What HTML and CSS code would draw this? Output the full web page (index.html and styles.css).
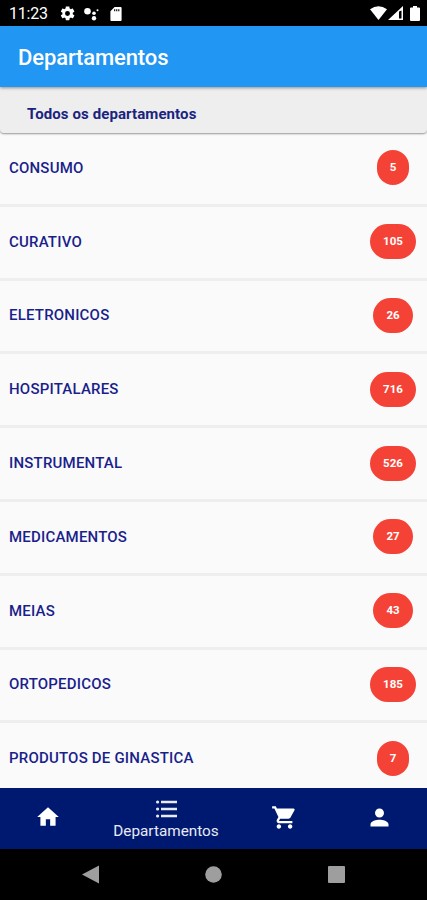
FILE: index.html
```html
<!DOCTYPE html>
<html lang="pt-BR">
<head>
    <meta charset="UTF-8">
    <meta name="viewport" content="width=device-width, initial-scale=1.0">
    <title>Departamentos</title>
    <link rel="stylesheet" href="styles.css">
</head>
<body>
    <div class="phone">
        <div class="status-bar">
            <span class="clock">11:23</span>
            <svg class="icon-gear" width="17" height="17" viewBox="0 0 24 24"><path fill-rule="evenodd" d="M19.4 13c.04-.3.06-.6.06-1s-.02-.7-.07-1l2.1-1.6c.2-.15.24-.4.12-.6l-2-3.5c-.12-.2-.37-.3-.6-.2l-2.4 1c-.5-.4-1-.7-1.6-1L14.6 2.5c-.04-.25-.24-.4-.5-.4h-4c-.25 0-.44.15-.48.4L9.25 5.1c-.6.25-1.13.57-1.62.94l-2.4-1c-.22-.08-.47 0-.6.22L2.74 8.8c-.12.2-.07.47.12.6L4.9 11c-.05.3-.09.64-.09 1s.02.7.07 1l-2 1.6c-.2.15-.25.4-.13.6l1.9 3.4c.12.2.37.3.6.2l2.4-1c.5.4 1 .7 1.6 1l.4 2.5c.05.25.25.4.5.4h4c.25 0 .45-.15.48-.4l.4-2.5c.6-.25 1.1-.6 1.6-1l2.4 1c.23.1.48 0 .6-.2l2-3.4c.1-.2.06-.45-.12-.6zM12 15.500a3.500 3.500 0 1 1 0-7 3.500 3.500 0 0 1 0 7z"/></svg>
            <svg class="icon-assistant" width="16" height="14" viewBox="0 0 16 14"><circle cx="3.500" cy="4.300" r="3.300"/><circle cx="10" cy="6.300" r="1.800"/><circle cx="13.500" cy="3.300" r="1"/><circle cx="10" cy="11.200" r="2.200"/></svg>
            <svg class="icon-sd" width="12" height="14" viewBox="0 0 12 15"><path fill-rule="evenodd" d="M4.500 0H11q1 0 1 1v13q0 1-1 1H1q-1 0-1-1V4.500zM4 2.500v2h1.200v-2zm2.200 0v2h1.200v-2zm2.200 0v2h1.200v-2z"/></svg>
            <div class="signals">
                <svg width="17" height="14" viewBox="0 0 17 14"><path d="M0 3.300Q8.500-3 17 3.300L8.500 14z"/></svg>
                <svg width="15" height="14" viewBox="0 0 15 14"><path fill-rule="evenodd" d="M15 0v14H0zM13.500 4.500L11 5.500v7h2.500z"/></svg>
                <svg class="battery" width="10" height="15" viewBox="0 0 10 15"><path d="M3 0h4v1.500h2q1 0 1 1V14q0 1-1 1H1q-1 0-1-1V2.500q0-1 1-1h2z"/></svg>
            </div>
        </div>

        <header class="app-bar">
            <h1>Departamentos</h1>
        </header>

        <div class="all-departments">Todos os departamentos</div>

        <ul class="list">
            <li><span>CONSUMO</span><div class="count"><b>5</b></div></li>
            <li><span>CURATIVO</span><div class="count"><b>105</b></div></li>
            <li><span>ELETRONICOS</span><div class="count"><b>26</b></div></li>
            <li><span>HOSPITALARES</span><div class="count"><b>716</b></div></li>
            <li><span>INSTRUMENTAL</span><div class="count"><b>526</b></div></li>
            <li><span>MEDICAMENTOS</span><div class="count"><b>27</b></div></li>
            <li><span>MEIAS</span><div class="count"><b>43</b></div></li>
            <li><span>ORTOPEDICOS</span><div class="count"><b>185</b></div></li>
            <li><span>PRODUTOS DE GINASTICA</span><div class="count"><b>7</b></div></li>
        </ul>

        <nav class="tabs">
            <a class="tab">
                <svg width="26" height="26" viewBox="0 0 24 24"><path d="M10 20v-6h4v6h5v-8h3L12 3 2 12h3v8z"/></svg>
            </a>
            <a class="tab active">
                <svg width="21" height="18" viewBox="0 0 21 18"><circle cx="1.600" cy="2" r="1.600"/><circle cx="1.600" cy="9" r="1.600"/><circle cx="1.600" cy="16" r="1.600"/><path d="M5 .800h16v2.400H5zM5 7.800h16v2.400H5zM5 14.800h16v2.400H5z"/></svg>
                <span>Departamentos</span>
            </a>
            <a class="tab">
                <svg width="27" height="27" viewBox="0 0 24 24"><path d="M7 18c-1.100 0-2 .9-2 2s.9 2 2 2 2-.9 2-2-.9-2-2-2zM1 2v2h2l3.600 7.600-1.350 2.450c-.16.280-.250.610-.250.950 0 1.100.9 2 2 2h12v-2H7.420c-.14 0-.25-.11-.25-.25l.03-.12.900-1.630h7.450c.75 0 1.410-.41 1.750-1.030l3.580-6.490A1 1 0 0 0 20 4H5.210l-.94-2H1zm16 16c-1.100 0-2 .9-2 2s.9 2 2 2 2-.9 2-2-.9-2-2-2z"/></svg>
            </a>
            <a class="tab">
                <svg width="27" height="27" viewBox="0 0 24 24"><path d="M12 12c2.200 0 4-1.800 4-4s-1.800-4-4-4-4 1.800-4 4 1.800 4 4 4zm0 2c-2.700 0-8 1.300-8 4v2h16v-2c0-2.700-5.300-4-8-4z"/></svg>
            </a>
        </nav>

        <div class="system-nav">
            <svg width="17" height="19" viewBox="0 0 17 19"><path d="M17 .500v18L0 9.500z"/></svg>
            <svg width="17" height="17" viewBox="0 0 17 17"><circle cx="8.500" cy="8.500" r="8.300"/></svg>
            <svg width="17" height="17" viewBox="0 0 17 17"><rect width="17" height="17" rx="1"/></svg>
        </div>
    </div>
</body>
</html>
```

FILE: styles.css
```css
* {
    box-sizing: border-box;
}
body {
    margin: 0;
    font-family: Roboto, sans-serif;
    background-color: #000000;
}
svg {
    display: block;
    fill: currentColor;
}
.phone {
    display: flex;
    flex-direction: column;
    height: 900px;
    overflow: hidden;
    background-color: #fafafa;
}
.status-bar {
    display: flex;
    align-items: center;
    flex: none;
    height: 26px;
    padding: 1px 7px 0 9px;
    background-color: #000000;
    color: #ffffff;
}
.clock {
    width: 50px;
    font-size: 16px;
    letter-spacing: -0.2px;
}
.icon-assistant {
    margin-left: 8px;
}
.icon-sd {
    margin-left: 10px;
}
.signals {
    display: flex;
    gap: 1px;
    margin-left: auto;
}
.battery {
    margin-left: 6px;
}
.app-bar {
    position: relative;
    z-index: 1;
    display: flex;
    align-items: center;
    flex: none;
    height: 61px;
    padding: 2px 18px 0;
    background-color: #2196f3;
    box-shadow: 0 1px 3px rgba(0, 0, 0, 0.4);
}
h1 {
    margin: 0;
    color: #ffffff;
    font-size: 22px;
    font-weight: 500;
    letter-spacing: -0.12px;
}
.all-departments {
    flex: none;
    height: 46px;
    padding: 7px 27px 0;
    background-color: #eeeeee;
    border-radius: 0 0 4px 4px;
    box-shadow: 0 1px 2px rgba(0, 0, 0, 0.4);
    color: #1a237e;
    font-size: 15px;
    font-weight: 700;
    letter-spacing: 0.1px;
    line-height: 40px;
}
.list {
    flex: 1;
    min-height: 0;
    overflow: hidden;
    margin: 0;
    padding: 0;
    list-style: none;
}
.list li {
    display: flex;
    align-items: center;
    justify-content: space-between;
    height: 73.8px;
    padding: 0 11px 1px 9px;
    border-bottom: 3px solid #eeeeee;
    color: #1a1f8c;
    font-size: 15px;
    font-weight: 500;
    letter-spacing: 0.2px;
}
.count {
    display: flex;
    justify-content: center;
    width: 46px;
}
.count b {
    height: 35px;
    padding: 0 13px;
    border-radius: 18px;
    background-color: #f44336;
    color: #ffffff;
    font-size: 11.5px;
    letter-spacing: 0;
    line-height: 35px;
}
.tabs {
    display: flex;
    flex: none;
    height: 61px;
    background-color: #001970;
    color: #ffffff;
}
.tab {
    display: flex;
    flex-direction: column;
    align-items: center;
    justify-content: center;
    width: 95px;
    padding-bottom: 3px;
}
.tab.active {
    width: 142px;
    gap: 4px;
    padding: 2px 0 0;
    color: #e8eaf6;
    font-size: 15.3px;
}
.system-nav {
    display: flex;
    align-items: center;
    justify-content: space-between;
    flex: none;
    height: 51px;
    padding: 0 82px;
    background-color: #000000;
    color: #9e9e9e;
}
```
